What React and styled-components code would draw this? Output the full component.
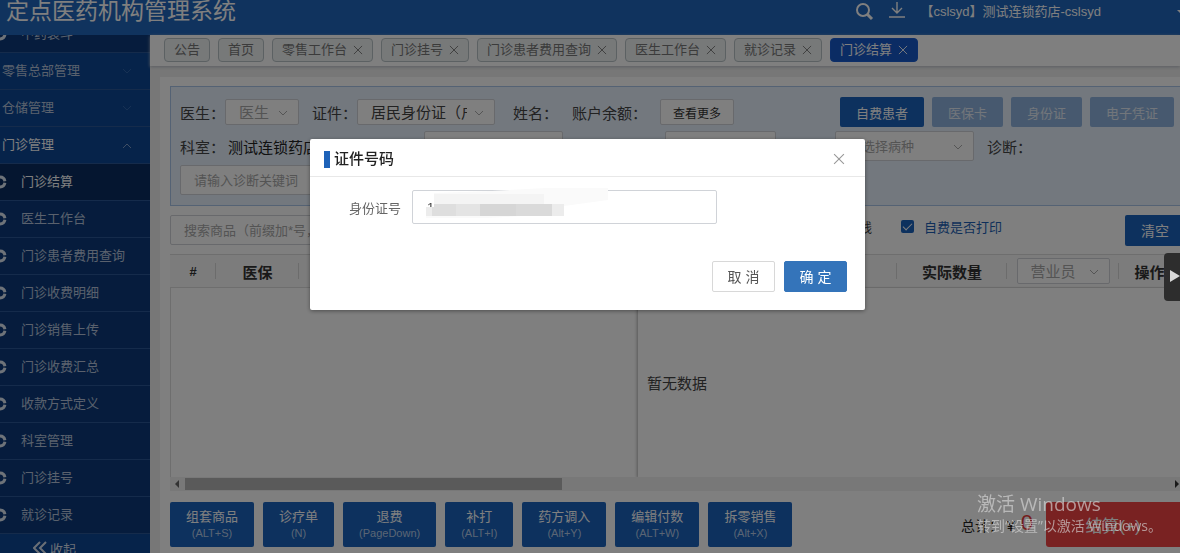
import React from 'react';
import styled, { createGlobalStyle, css } from 'styled-components';

const GlobalStyle = createGlobalStyle`
  * { box-sizing: border-box; }
  body {
    margin: 0;
    overflow: hidden;
    background: #fff;
    color: #444;
    font-family: "Liberation Sans", "Noto Sans CJK SC", sans-serif;
    font-size: 15px;
  }
  button, input, select { font-family: inherit; margin: 0; }
`;

const Page = styled.div`
  display: flex;
  flex-direction: column;
  height: 100vh;
  overflow: hidden;
`;

/* ---------- header ---------- */
const Header = styled.header`
  flex: none;
  display: flex;
  align-items: center;
  height: 35px;
  padding: 0 0 12px 6px;
  background: #2066bc;
  color: #fff;
`;
const SystemName = styled.h1`
  flex: 1;
  margin: 0;
  font-size: 23px;
  line-height: 23px;
  font-weight: 400;
  white-space: nowrap;
`;
const HeaderTools = styled.div`
  display: flex;
  align-items: center;
  gap: 15px;
`;
const IconButton = styled.button`
  display: flex;
  padding: 0;
  border: 0;
  background: none;
  color: inherit;
`;
const Account = styled.span`
  font-size: 13px;
  line-height: 24px;
  white-space: nowrap;
  margin-right: 61px;
`;
const Caret = styled.span`
  width: 0;
  border: 4px solid transparent;
  border-top-color: #fff;
  border-bottom: 0;
  margin-right: -5px;
`;

/* ---------- sidebar ---------- */
const Body = styled.div`
  flex: 1;
  min-height: 0;
  display: flex;
`;
const Sidebar = styled.nav`
  flex: none;
  width: 150px;
  display: flex;
  flex-direction: column;
  background: #0d3c80;
  color: #c9d6ea;
`;
const MenuList = styled.ul`
  flex: 1;
  min-height: 0;
  display: flex;
  flex-direction: column;
  justify-content: flex-end;
  margin: 0;
  padding: 0;
  overflow: hidden;
  list-style: none;
`;
const MenuRow = styled.li`
  flex: none;
  height: 37px;
  border-bottom: 1px solid #2a5696;
  background: ${(p) => (p.$group ? '#0c4694' : p.$active ? '#0a2c60' : '#0d397a')};
`;
const MenuLink = styled.a`
  display: flex;
  align-items: center;
  height: 100%;
  padding: 0 18px 0 ${(p) => (p.$group ? 2 : 0)}px;
  color: ${(p) => (p.$bright ? '#fff' : '#b4c3da')};
  font-size: 13px;
  line-height: 18px;
  text-decoration: none;
  white-space: nowrap;
  span { flex: 1; }
`;
const RingIcon = styled.svg`
  flex: none;
  width: 14px;
  height: 14px;
  margin: 0 14px 0 -7px;
  color: #dde6f2;
`;
const Collapse = styled.button`
  flex: none;
  display: flex;
  align-items: flex-start;
  gap: 3px;
  height: 19px;
  padding: 7px 0 0 33px;
  border: 0;
  overflow: hidden;
  background: #0c4694;
  color: #d5dfec;
  font-size: 13px;
  line-height: 18px;
`;

/* ---------- tabs ---------- */
const Main = styled.main`
  flex: 1;
  min-width: 0;
  display: flex;
  flex-direction: column;
  background: #eeeeee;
`;
const TabBar = styled.div`
  flex: none;
  display: flex;
  align-items: center;
  gap: 8px;
  height: 31px;
  padding: 0 14px 2px;
  background: #fff;
  box-shadow: 0 1px 3px #b8bcc4;
`;
const Tab = styled.button`
  display: flex;
  align-items: center;
  gap: 6px;
  height: 24px;
  padding: 0 9px;
  border: 1px solid ${(p) => (p.$active ? '#1a5cd0' : '#b8c2c6')};
  border-radius: 4px;
  background: ${(p) => (p.$active ? '#1759c8' : '#eef2f3')};
  color: ${(p) => (p.$active ? '#fff' : '#777')};
  font-size: 13px;
  line-height: 20px;
  white-space: nowrap;
`;

/* ---------- work area ---------- */
const Card = styled.div`
  flex: 1;
  min-height: 0;
  display: flex;
  flex-direction: column;
  margin: 11px 0 0 10px;
  padding: 9px 0 6px 10px;
  background: #fff;
`;
const PatientPanel = styled.section`
  flex: none;
  display: flex;
  flex-direction: column;
  gap: 4px;
  height: 120px;
  padding: 10px 6px 0 9px;
  border: 1px solid #a9c5e8;
  border-right: 0;
  background: #e6f1fd;
`;
const FormRow = styled.div`
  display: flex;
  align-items: center;
  height: 30px;
  white-space: nowrap;
`;
const Field = styled.label`
  display: flex;
  align-items: center;
  width: ${(p) => p.$width}px;
  flex: none;
`;
const FieldName = styled.span`
  flex: 1;
`;
const FieldValue = styled.span`
  flex: none;
  width: ${(p) => p.$width}px;
  color: #222;
`;
const boxed = css`
  border: 1px solid #d0d3d8;
  border-radius: 2px;
  background: #fff;
`;
const TextInput = styled.input`
  ${boxed}
  width: ${(p) => p.$width}px;
  height: 30px;
  padding: 0 13px;
  font-size: 13px;
  color: #555;
  &::placeholder { color: #a8a8a8; opacity: 1; }
`;
const SelectWrap = styled.span`
  position: relative;
  display: inline-flex;
  flex: none;
  width: ${(p) => p.$width}px;
  height: ${(p) => p.$height || 26}px;
  svg { position: absolute; right: 11px; top: 50%; margin-top: -2px; pointer-events: none; }
`;
const Select = styled.select`
  ${boxed}
  appearance: none;
  width: 100%;
  padding: 0 27px 0 13px;
  color: ${(p) => (p.$filled ? '#444' : '#a8a8a8')};
  font-size: ${(p) => p.$size || 15}px;
  font-weight: 400;
`;
const MoreButton = styled.button`
  ${boxed}
  width: 74px;
  height: 26px;
  padding: 0;
  color: #333;
  font-size: 12px;
`;
const ModeButtons = styled.div`
  display: flex;
  gap: 8px;
  margin-left: auto;
`;
const ModeButton = styled.button`
  height: 30px;
  padding: 0 16px;
  border: 0;
  border-radius: 2px;
  background: ${(p) => (p.$active ? '#1b62bc' : '#8fb3de')};
  color: ${(p) => (p.$active ? '#fff' : '#e4ecf6')};
  font-size: 13px;
`;
const SearchRow = styled.div`
  flex: none;
  display: flex;
  align-items: center;
  justify-content: space-between;
  height: 48px;
`;
const SearchTools = styled.div`
  display: flex;
  align-items: center;
  height: 30px;
  font-size: 13px;
`;
const CheckLabel = styled.label`
  display: flex;
  align-items: center;
  gap: 10px;
  margin: 0 123px 8px 29px;
  color: #1d5fb4;
`;
const StatusText = styled.span`
  margin-bottom: 8px;
`;
const CheckBox = styled.input`
  appearance: none;
  width: 13px;
  height: 13px;
  margin: 0;
  border-radius: 2px;
  background: #1b62bc;
  display: grid;
  place-items: center;
  &::after {
    content: "";
    width: 4px;
    height: 8px;
    margin-top: -2px;
    border: solid #fff;
    border-width: 0 1px 1px 0;
    transform: rotate(45deg);
  }
`;
const ClearButton = styled.button`
  width: 60px;
  height: 31px;
  margin-right: -5px;
  border: 0;
  border-radius: 2px;
  background: #1b62bc;
  color: #fff;
  font-size: 14px;
`;
const Table = styled.table`
  flex: none;
  display: table;
  width: 100%;
  table-layout: fixed;
  border-collapse: separate;
  border-spacing: 0;
`;
const Th = styled.th`
  width: ${(p) => (p.$width ? `${p.$width}px` : 'auto')};
  height: 34px;
  padding: 0;
  border: solid #dcdcdc;
  border-width: 1px 0;
  background: linear-gradient(#d8d8d8, #d8d8d8) right center / 1px 16px no-repeat #f8f8f8;
  color: #333;
  font-size: ${(p) => p.$size || 15}px;
  text-align: center;
  white-space: nowrap;
`;
const TableArea = styled.div`
  flex: 1;
  min-height: 0;
  display: flex;
  border-left: 1px solid #dcdcdc;
`;
const LeftPane = styled.div`
  flex: 467 1 0;
`;
const RightPane = styled.div`
  flex: 533 1 0;
  display: flex;
  align-items: center;
  padding-left: 9px;
  background: #fff;
  box-shadow: -1px 1px 3px #b0b0b0;
`;
const ScrollTrack = styled.div`
  flex: none;
  display: flex;
  align-items: center;
  justify-content: space-between;
  height: 14px;
  margin-bottom: 11px;
  padding: 0 1px 0 5px;
  background: #f0f0f0;
`;
const ScrollThumb = styled.div`
  width: 37.5%;
  height: 12px;
  margin: 0 auto 0 6px;
  background: #b4b4b4;
`;
const Footer = styled.footer`
  flex: none;
  display: flex;
  gap: 9px;
  height: 45px;
`;
const ActionButton = styled.button`
  display: flex;
  flex-direction: column;
  align-items: center;
  justify-content: center;
  height: 45px;
  padding: 0 16px;
  border: 0;
  border-radius: 2px;
  background: #1b62bc;
  color: #fff;
  font-size: 13px;
  line-height: 16px;
  white-space: nowrap;
  small { color: #b4cbe8; font-size: 11px; line-height: 16px; }
`;
const Total = styled.div`
  display: flex;
  align-items: center;
  margin-left: auto;
  color: #222;
  font-size: 14px;
  strong { margin: 0 4px 4px 6px; color: #e83838; font-size: 22px; font-weight: 400; }
`;
const SettleButton = styled.button`
  width: 134px;
  border: 0;
  border-radius: 3px 0 0 3px;
  background: #f24444;
  color: #fff;
  font-size: 17px;
`;

/* ---------- layers over the page ---------- */
const Mask = styled.div`
  position: fixed;
  inset: 0;
  display: flex;
  align-items: flex-start;
  justify-content: center;
  padding: 139px 5px 0 0;
  background: rgba(0, 0, 0, 0.5);
`;
const Dialog = styled.form`
  width: 555px;
  border-radius: 2px;
  background: #fff;
  box-shadow: 0 1px 4px rgba(0, 0, 0, 0.4);
`;
const DialogHeader = styled.div`
  display: flex;
  align-items: center;
  gap: 4px;
  height: 38px;
  padding: 3px 20px 0 14px;
  border-bottom: 1px solid #e8e8e8;
  color: #999;
`;
const TitleMark = styled.span`
  width: 6px;
  height: 17px;
  background: #1e62b8;
`;
const DialogTitle = styled.h2`
  flex: 1;
  margin: 0;
  color: #222;
  font-size: 15px;
  line-height: 20px;
  font-weight: 500;
`;
const DialogBody = styled.div`
  display: flex;
  align-items: center;
  gap: 11px;
  padding: 13px 0 0 39px;
`;
const IdLabel = styled.label`
  color: #666;
  font-size: 13px;
`;
const IdBox = styled.div`
  position: relative;
  width: 305px;
  height: 34px;
`;
const IdInput = styled.input`
  ${boxed}
  width: 100%;
  height: 100%;
  padding: 0 14px;
  color: #444;
  font-size: 13px;
`;
const Mosaic = styled.svg`
  position: absolute;
  left: 14px;
  top: -2px;
`;
const DialogFooter = styled.div`
  display: flex;
  justify-content: flex-end;
  gap: 9px;
  padding: 37px 18px 18px 0;
`;
const DialogButton = styled.button`
  width: 63px;
  height: 31px;
  padding: 0 0 2px;
  border: 1px solid ${(p) => (p.$primary ? '#3474ba' : '#d8d8d8')};
  border-radius: 2px;
  background: ${(p) => (p.$primary ? '#3474ba' : '#fff')};
  color: ${(p) => (p.$primary ? '#fff' : '#555')};
  font-size: 14px;
`;
const Handle = styled.button`
  position: fixed;
  right: 0;
  top: 253px;
  width: 16px;
  height: 48px;
  padding: 0 0 0 5px;
  border: 0;
  border-radius: 4px 0 0 4px;
  background: #2d2d2d;
`;
const Activation = styled.div`
  position: fixed;
  right: 18px;
  bottom: 17px;
  color: rgba(215, 215, 215, 0.65);
  font-family: "Open Sans", "Noto Sans CJK SC", sans-serif;
  font-size: 14px;
  line-height: 20px;
  white-space: nowrap;
  pointer-events: none;
  p { margin: 0; }
  p:first-child { font-size: 19px; line-height: 24px; }
`;

/* ---------- drawings ---------- */
const Cross = ({ size = 10 }) => (
  <svg width={size} height={size} viewBox="0 0 11 11" stroke="currentColor" fill="none">
    <path d="M1 1l9 9M10 1l-9 9" />
  </svg>
);
const Chevron = ({ up, color = '#aaa' }) => (
  <svg width="10" height="7" viewBox="0 0 10 7" stroke={color} fill="none">
    <path d={up ? 'M1 6l4-4 4 4' : 'M1 1l4 4 4-4'} />
  </svg>
);
const Triangle = ({ left, size = 8, color = '#333' }) => (
  <svg width={size / 2} height={size} viewBox="0 0 4 8" fill={color}>
    <path d={left ? 'M4 0v8L0 4z' : 'M0 0v8l4-4z'} />
  </svg>
);
const Ring = () => (
  <RingIcon viewBox="0 0 14 14" fill="none" stroke="currentColor" strokeWidth="3">
    <path d="M7 2A5 5 0 0 1 11.9 6.2M11.9 7.8A5 5 0 0 1 7 12M7 12A5 5 0 0 1 7 2" />
  </RingIcon>
);

const Dropdown = ({ width, height, text, filled, size, label }) => (
  <SelectWrap $width={width} $height={height}>
    <Select $filled={filled} $size={size} aria-label={label}>
      <option>{text}</option>
    </Select>
    <Chevron />
  </SelectWrap>
);

const menu = [
  { text: '中药装斗' },
  { text: '零售总部管理', group: true },
  { text: '仓储管理', group: true },
  { text: '门诊管理', group: true, open: true },
  { text: '门诊结算', active: true },
  { text: '医生工作台' },
  { text: '门诊患者费用查询' },
  { text: '门诊收费明细' },
  { text: '门诊销售上传' },
  { text: '门诊收费汇总' },
  { text: '收款方式定义' },
  { text: '科室管理' },
  { text: '门诊挂号' },
  { text: '就诊记录' },
];
const tabs = ['公告', '首页', '零售工作台', '门诊挂号', '门诊患者费用查询', '医生工作台', '就诊记录', '门诊结算'];
const modes = ['自费患者', '医保卡', '身份证', '电子凭证'];
const actions = [
  ['组套商品', '(ALT+S)'],
  ['诊疗单', '(N)'],
  ['退费', '(PageDown)'],
  ['补打', '(ALT+I)'],
  ['药方调入', '(Alt+Y)'],
  ['编辑付数', '(ALT+W)'],
  ['拆零销售', '(Alt+X)'],
];

export default function App() {
  return (
    <>
      <GlobalStyle />
      <Page>
        <Header>
          <SystemName>定点医药机构管理系统</SystemName>
          <HeaderTools>
            <IconButton aria-label="搜索">
              <svg width="19" height="19" viewBox="0 0 19 19" fill="none" stroke="currentColor">
                <circle cx="8" cy="8" r="6" strokeWidth="2" />
                <path d="M12 12l5 5" strokeWidth="3" />
              </svg>
            </IconButton>
            <IconButton aria-label="下载">
              <svg width="16" height="20" viewBox="0 0 16 20" fill="none" stroke="currentColor" strokeWidth="1.4">
                <path d="M8 0v11M3 6l5 5 5-5M0 15h16" />
              </svg>
            </IconButton>
            <Account>【cslsyd】测试连锁药店-cslsyd</Account>
            <Caret />
          </HeaderTools>
        </Header>

        <Body>
          <Sidebar>
            <MenuList>
              {menu.map((m) => (
                <MenuRow key={m.text} $group={m.group} $active={m.active}>
                  <MenuLink href="#" $group={m.group} $bright={m.open || m.active}>
                    {!m.group && <Ring />}
                    <span>{m.text}</span>
                    {m.group && <Chevron up={m.open} color={m.open ? '#7f9cc8' : '#2f62a8'} />}
                  </MenuLink>
                </MenuRow>
              ))}
            </MenuList>
            <Collapse>
              <svg width="14" height="14" viewBox="0 0 14 14" fill="none" stroke="currentColor" strokeWidth="2">
                <path d="M7 1L1 7l6 6M13 1L7 7l6 6" />
              </svg>
              收起
            </Collapse>
          </Sidebar>

          <Main>
            <TabBar>
              {tabs.map((t, i) => (
                <Tab key={t} $active={t === '门诊结算'}>
                  {t}
                  {i > 1 && <Cross />}
                </Tab>
              ))}
            </TabBar>

            <Card>
              <PatientPanel>
                <FormRow>
                  <Field $width={132}>
                    <FieldName>医生：</FieldName>
                    <Dropdown width={74} text="医生" />
                    <FieldValue $width={14} />
                  </Field>
                  <Field $width={201}>
                    <FieldName>证件：</FieldName>
                    <Dropdown width={138} text="居民身份证（户口簿）" filled />
                    <FieldValue $width={18} />
                  </Field>
                  <Field as="span" $width={59}>姓名：</Field>
                  <Field as="span" $width={88}>账户余额：</Field>
                  <MoreButton>查看更多</MoreButton>
                  <ModeButtons>
                    {modes.map((m, i) => (
                      <ModeButton key={m} $active={i === 0}>{m}</ModeButton>
                    ))}
                  </ModeButtons>
                </FormRow>
                <FormRow>
                  <Field as="span" $width={48}>科室：</Field>
                  <FieldValue $width={106}>测试连锁药店</FieldValue>
                  <Field $width={229}>
                    <FieldName>医疗类别：</FieldName>
                    <TextInput $width={139} />
                  </Field>
                  <FieldValue $width={45} />
                  <Field $width={168}>
                    <FieldName>手机：</FieldName>
                    <TextInput $width={111} />
                  </Field>
                  <FieldValue $width={14} />
                  <Field $width={183}>
                    <FieldName>病种：</FieldName>
                    <Dropdown width={139} height={30} size={13} text="请选择病种" />
                  </Field>
                  <FieldValue $width={14} />
                  <span>诊断：</span>
                </FormRow>
                <FormRow>
                  <TextInput $width={244} placeholder="请输入诊断关键词" aria-label="诊断关键词" />
                </FormRow>
              </PatientPanel>

              <SearchRow>
                <TextInput $width={300} placeholder="搜索商品（前缀加*号，模糊查询）" aria-label="搜索商品" />
                <SearchTools>
                  <StatusText>在线</StatusText>
                  <CheckLabel>
                    <CheckBox type="checkbox" defaultChecked />
                    自费是否打印
                  </CheckLabel>
                  <ClearButton>清空</ClearButton>
                </SearchTools>
              </SearchRow>

              <Table>
                <thead>
                  <tr>
                    <Th $width={46} $size={13}>#</Th>
                    <Th $width={83}>医保</Th>
                    <Th />
                    <Th $width={110}>实际数量</Th>
                    <Th $width={112}>
                      <Dropdown width={93} size={15} text="营业员" label="营业员" />
                    </Th>
                    <Th $width={61}>操作</Th>
                  </tr>
                </thead>
              </Table>
              <TableArea>
                <LeftPane />
                <RightPane>暂无数据</RightPane>
              </TableArea>
              <ScrollTrack>
                <Triangle left color="#666" />
                <ScrollThumb />
                <Triangle />
              </ScrollTrack>

              <Footer>
                {actions.map(([name, key]) => (
                  <ActionButton key={name}>
                    {name}
                    <small>{key}</small>
                  </ActionButton>
                ))}
                <Total>
                  总计：&nbsp;¥<strong>0</strong>
                </Total>
                <SettleButton>结算(+)</SettleButton>
              </Footer>
            </Card>
          </Main>
        </Body>
      </Page>

      <Mask>
        <Dialog role="dialog" aria-labelledby="dialog-title" onSubmit={(e) => e.preventDefault()}>
          <DialogHeader>
            <TitleMark />
            <DialogTitle id="dialog-title">证件号码</DialogTitle>
            <IconButton type="button" aria-label="关闭"><Cross size={12} /></IconButton>
          </DialogHeader>
          <DialogBody>
            <IdLabel htmlFor="id-number">身份证号</IdLabel>
            <IdBox>
              <IdInput id="id-number" defaultValue="1" />
              <Mosaic width="182" height="34" viewBox="0 0 182 34">
                <path d="M8 5L66 3 120 0h62v12l-44 6v8L60 30H0V19h8z" fill="#fafafa" />
                <path d="M8 6h110v10H8z" fill="#f4f4f4" />
                <path d="M0 19h8v-3h130v12H0z" fill="#ececec" />
                <path d="M8 16h22v12H6v-9h2z" fill="#dedede" />
                <path d="M30 16h24v12H30z" fill="#e4e4e4" />
                <path d="M54 16h36v12H54z" fill="#d6d6d6" />
                <path d="M90 16h36v12H90z" fill="#dadada" />
              </Mosaic>
            </IdBox>
          </DialogBody>
          <DialogFooter>
            <DialogButton type="button">取 消</DialogButton>
            <DialogButton type="submit" $primary>确 定</DialogButton>
          </DialogFooter>
        </Dialog>
      </Mask>

      <Handle aria-label="展开">
        <svg width="10" height="12" viewBox="0 0 10 12" fill="#d8d8d8"><path d="M0 0v12l10-6z" /></svg>
      </Handle>
      <Activation>
        <p>激活 Windows</p>
        <p>转到“设置”以激活 Windows。</p>
      </Activation>
    </>
  );
}
